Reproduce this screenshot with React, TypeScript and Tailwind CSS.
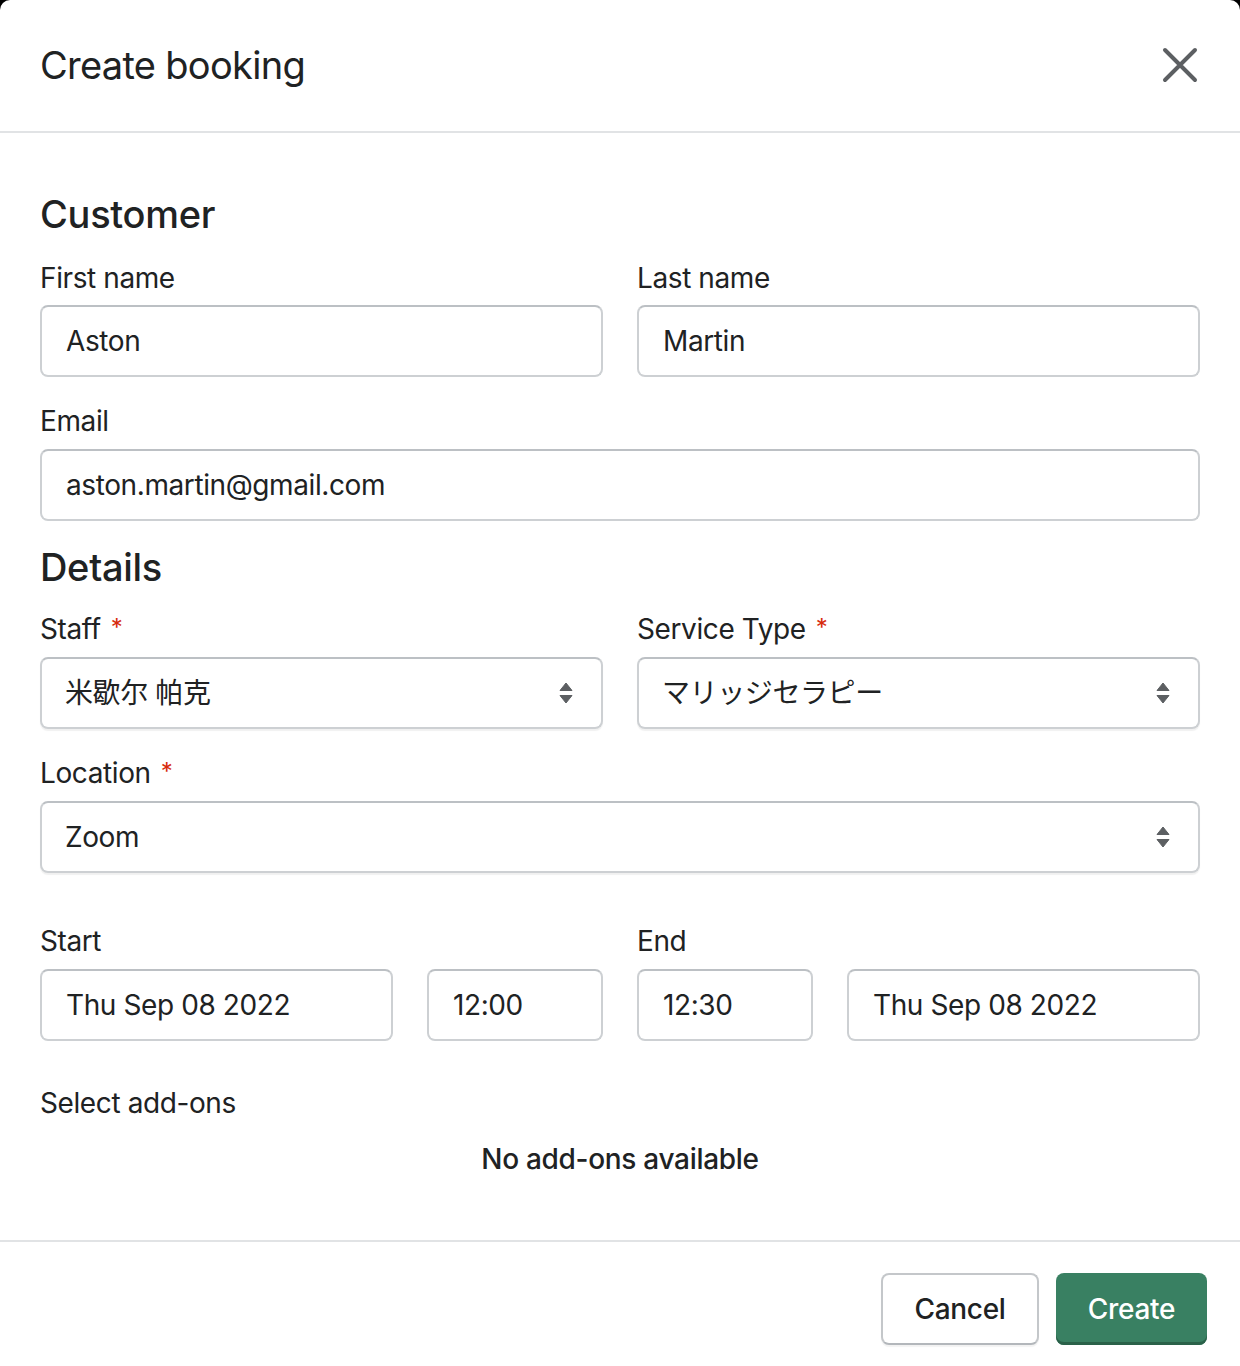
import React from "react";

const font = { fontFamily: 'Inter, "Noto Sans CJK JP", "Noto Sans CJK SC", sans-serif' };

function Label({ text, required }: { text: string; required?: boolean }) {
  return (
    <div className="h-[40px] flex items-center text-[28px] leading-[40px] tracking-[-0.4px] text-[#202223]">
      <span>{text}</span>
      {required && <span className="ml-[10px] text-[24px] text-[#d72c0d] -mt-[2px]">*</span>}
    </div>
  );
}

function Input({ value, className = "" }: { value: string; className?: string }) {
  return (
    <div
      className={`h-[72px] flex items-center pl-[24px] rounded-[8px] border-2 border-[#cdd0d3] border-t-[#bcc0c4] bg-white text-[28px] tracking-[-0.4px] text-[#202223] ${className}`}
    >
      {value}
    </div>
  );
}

function SelectArrows() {
  return (
    <svg width="14" height="22" viewBox="0 0 14 22" className="shrink-0">
      <path d="M7 1 L13 8.5 L1 8.5 Z" fill="#5c5f62" strokeLinejoin="round" stroke="#5c5f62" strokeWidth="1" />
      <path d="M7 21 L13 13.5 L1 13.5 Z" fill="#5c5f62" strokeLinejoin="round" stroke="#5c5f62" strokeWidth="1" />
    </svg>
  );
}

function Select({ value }: { value: string }) {
  return (
    <div className="h-[72px] flex items-center justify-between pl-[23px] pr-[28px] rounded-[8px] border-2 border-[#cdd0d3] border-t-[#bcc0c4] shadow-[0_2px_1px_rgba(0,0,0,0.06)] bg-white text-[28px] tracking-[-0.4px] text-[#202223]">
      <span>{value}</span>
      <SelectArrows />
    </div>
  );
}

export default function App() {
  return (
    <div className="w-[1240px] h-[1366px] bg-black overflow-hidden" style={font}>
      <div className="w-[1240px] h-[1366px] bg-white rounded-t-[10px] flex flex-col">
        {/* Header */}
        <div className="h-[133px] flex items-center justify-between pl-[40px] pr-[42px] border-b-2 border-[#e1e3e5] shrink-0">
          <h1 className="text-[38px] leading-[48px] tracking-[-0.7px] text-[#202223] font-normal -mt-[2px]">Create booking</h1>
          <svg width="36" height="36" viewBox="0 0 36 36" className="-mt-[2px]">
            <path d="M3 3 L33 33 M33 3 L3 33" stroke="#5c5f62" strokeWidth="4" strokeLinecap="round" />
          </svg>
        </div>

        {/* Body */}
        <div className="px-[40px] pt-[57px] flex flex-col shrink-0 h-[1107px]">
          <h2 className="text-[38px] leading-[48px] font-medium tracking-[-0.3px] text-[#202223]">Customer</h2>
          <div className="grid grid-cols-[563px_1fr] gap-x-[34px] mt-[20px]">
            <div className="flex flex-col gap-[7px]">
              <Label text="First name" />
              <Input value="Aston" />
            </div>
            <div className="flex flex-col gap-[7px]">
              <Label text="Last name" />
              <Input value="Martin" />
            </div>
          </div>
          <div className="flex flex-col gap-[8px] mt-[24px]">
            <Label text="Email" />
            <Input value="aston.martin@gmail.com" />
          </div>

          <h2 className="text-[38px] leading-[48px] font-medium tracking-[-0.3px] text-[#202223] mt-[22px]">Details</h2>
          <div className="grid grid-cols-[563px_1fr] gap-x-[34px] mt-[18px]">
            <div className="flex flex-col gap-[8px]">
              <Label text="Staff" required />
              <Select value="米歇尔 帕克" />
            </div>
            <div className="flex flex-col gap-[8px]">
              <Label text="Service Type" required />
              <Select value="マリッジセラピー" />
            </div>
          </div>
          <div className="flex flex-col gap-[8px] mt-[24px]">
            <Label text="Location" required />
            <Select value="Zoom" />
          </div>

          <div className="grid grid-cols-[563px_1fr] gap-x-[34px] mt-[48px]">
            <div className="flex flex-col gap-[8px]">
              <Label text="Start" />
              <div className="flex gap-[34px]">
                <Input value="Thu Sep 08 2022" className="w-[353px]" />
                <Input value="12:00" className="flex-1" />
              </div>
            </div>
            <div className="flex flex-col gap-[8px]">
              <Label text="End" />
              <div className="flex gap-[34px]">
                <Input value="12:30" className="w-[176px]" />
                <Input value="Thu Sep 08 2022" className="flex-1" />
              </div>
            </div>
          </div>

          <div className="mt-[42px]">
            <Label text="Select add-ons" />
          </div>
          <div className="mt-[16px] h-[40px] flex items-center justify-center text-[28px] font-medium tracking-[-0.3px] text-[#202223]">
            No add-ons available
          </div>
        </div>

        {/* Footer */}
        <div className="border-t-2 border-[#e1e3e5] flex justify-end gap-[17px] pt-[31px] pr-[33px]">
          <button className="w-[158px] h-[72px] rounded-[8px] bg-white border-2 border-[#c4c7ca] border-b-[#b3b7bb] shadow-[0_2px_1px_rgba(0,0,0,0.05)] text-[28px] font-medium tracking-[-0.3px] text-[#202223]">
            Cancel
          </button>
          <button className="w-[151px] h-[72px] rounded-[8px] bg-[#398062] shadow-[inset_0_-3px_0_#2a6149] text-[28px] font-medium tracking-[-0.3px] text-white">
            Create
          </button>
        </div>
      </div>
    </div>
  );
}
